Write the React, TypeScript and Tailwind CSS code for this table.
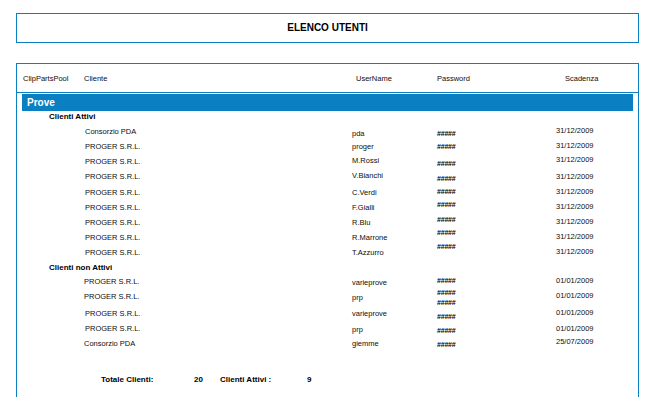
import React from "react";

type Row = {
  cliente: string;
  user: string;
  pw: string[];
  date: string;
  h: number;
  cx: number;
  c: number;
  u: number;
  p: number;
  d: number;
};

const attivi: Row[] = [
  { cliente: "Consorzio PDA", user: "pda", pw: ["#####"], date: "31/12/2009", h: 15, cx: 0, c: 5, u: 7, p: 7, d: 4 },
  { cliente: "PROGER S.R.L.", user: "proger", pw: ["#####"], date: "31/12/2009", h: 15, cx: 0, c: 5, u: 5, p: 5, d: 4 },
  { cliente: "PROGER S.R.L.", user: "M.Rossi", pw: ["#####"], date: "31/12/2009", h: 15, cx: 0, c: 5, u: 4, p: 7, d: 3 },
  { cliente: "PROGER S.R.L.", user: "V.Bianchi", pw: ["#####"], date: "31/12/2009", h: 15, cx: 0, c: 5, u: 4, p: 7, d: 5 },
  { cliente: "PROGER S.R.L.", user: "C.Verdi", pw: ["#####"], date: "31/12/2009", h: 15, cx: 0, c: 6, u: 6, p: 5, d: 5 },
  { cliente: "PROGER S.R.L.", user: "F.Gialli", pw: ["#####"], date: "31/12/2009", h: 15, cx: 0, c: 6, u: 6, p: 3, d: 5 },
  { cliente: "PROGER S.R.L.", user: "R.Blu", pw: ["#####"], date: "31/12/2009", h: 15, cx: 0, c: 6, u: 6, p: 3, d: 5 },
  { cliente: "PROGER S.R.L.", user: "R.Marrone", pw: ["#####"], date: "31/12/2009", h: 15, cx: 0, c: 6, u: 6, p: 1, d: 5 },
  { cliente: "PROGER S.R.L.", user: "T.Azzurro", pw: ["#####"], date: "31/12/2009", h: 15, cx: 0, c: 6, u: 6, p: 0, d: 5 },
];

const nonAttivi: Row[] = [
  { cliente: "PROGER S.R.L.", user: "varieprove", pw: ["#####"], date: "01/01/2009", h: 15, cx: -1, c: 4, u: 5, p: 3, d: 3 },
  { cliente: "PROGER S.R.L.", user: "prp", pw: ["#####", "#####"], date: "01/01/2009", h: 16, cx: -1, c: 4, u: 5, p: 0, d: 3 },
  { cliente: "PROGER S.R.L.", user: "varieprove", pw: ["#####"], date: "01/01/2009", h: 15, cx: 0, c: 5, u: 5, p: 8, d: 4 },
  { cliente: "PROGER S.R.L.", user: "prp", pw: ["#####"], date: "01/01/2009", h: 15, cx: 0, c: 5, u: 6, p: 7, d: 5 },
  { cliente: "Consorzio PDA", user: "giemme", pw: ["#####"], date: "25/07/2009", h: 15, cx: -1, c: 5, u: 5, p: 6, d: 3 },
];

function DataRow({ r }: { r: Row }) {
  return (
    <div className="flex text-[7.5px] leading-[10px] text-[#0d0d0d]" style={{ height: r.h }}>
      <div className="w-[335px] shrink-0" style={{ paddingLeft: 68 + r.cx, paddingTop: r.c }}>
        {r.cliente}
      </div>
      <div className="w-[85px] shrink-0" style={{ paddingTop: r.u }}>
        {r.user}
      </div>
      <div className="w-[119px] shrink-0 flex flex-col" style={{ paddingTop: r.p }}>
        {r.pw.map((p, i) => (
          <span key={i} className="text-[7px] font-bold leading-[10px] text-black tracking-[-0.2px]">
            {p}
          </span>
        ))}
      </div>
      <div className="w-[60px] shrink-0" style={{ paddingTop: r.d }}>
        {r.date}
      </div>
    </div>
  );
}

export default function App() {
  return (
    <div className="w-[654px] h-[397px] bg-white overflow-hidden flex flex-col pt-[13px] px-[16px] font-['Liberation_Sans',Arial,sans-serif]">
      <div className="h-[30px] w-[623px] shrink-0 border border-[#0a7fc1] flex items-center justify-center">
        <span className="text-[10px] font-bold text-black leading-none">ELENCO UTENTI</span>
      </div>
      <div className="mt-[20px] w-[623px] flex-1 border-t border-l border-r border-[#0a7fc1] flex flex-col">
        <div className="h-[29px] shrink-0 border-b border-[#0a7fc1] flex text-[7.5px] leading-[10px] text-[#0d0d0d] pt-[10px]">
          <div className="w-[67px] shrink-0 pl-[6px]">ClipPartsPool</div>
          <div className="w-[272px] shrink-0">Cliente</div>
          <div className="w-[81px] shrink-0">UserName</div>
          <div className="w-[128px] shrink-0">Password</div>
          <div>Scadenza</div>
        </div>
        <div className="mt-[1px] ml-[5px] w-[611px] h-[17px] shrink-0 bg-[#0a7fc1] flex items-center pl-[5px]">
          <span className="text-[10px] font-bold text-white leading-none">Prove</span>
        </div>
        <div className="pt-[1px] pl-[32px] h-[11px] text-[8px] font-bold leading-[10px] text-black">Clienti Attivi</div>
        <div className="flex flex-col">
          {attivi.map((r, i) => (
            <DataRow key={i} r={r} />
          ))}
        </div>
        <div className="mt-[6px] pl-[32px] h-[10px] text-[8px] font-bold leading-[10px] text-black">Clienti non Attivi</div>
        <div className="flex flex-col">
          {nonAttivi.map((r, i) => (
            <DataRow key={i} r={r} />
          ))}
        </div>
        <div className="mt-[26px] flex text-[8px] font-bold leading-[10px] text-black">
          <div className="w-[177px] shrink-0 pl-[84px]">Totale Clienti:</div>
          <div className="w-[26px] shrink-0">20</div>
          <div className="w-[87px] shrink-0">Clienti Attivi :</div>
          <div>9</div>
        </div>
      </div>
    </div>
  );
}
